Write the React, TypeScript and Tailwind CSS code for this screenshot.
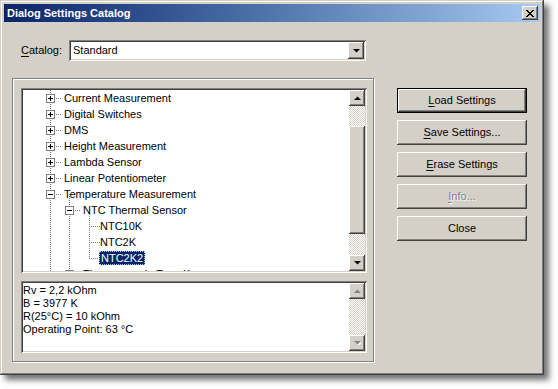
import React from "react";

const raised =
  "shadow-[inset_-1px_-1px_#404040,inset_1px_1px_#fff,inset_-2px_-2px_#808080,inset_2px_2px_#d4d0c8]";
const sunken =
  "shadow-[inset_1px_1px_#808080,inset_-1px_-1px_#fff,inset_2px_2px_#404040,inset_-2px_-2px_#d4d0c8]";
const hatch =
  "bg-[repeating-conic-gradient(#d4d0c8_0_25%,#fff_0_50%)] bg-[length:2px_2px]";

type Row = { label: string; level: number; box?: "+" | "-"; selected?: boolean };

const rows: Row[] = [
  { label: "Current Measurement", level: 1, box: "+" },
  { label: "Digital Switches", level: 1, box: "+" },
  { label: "DMS", level: 1, box: "+" },
  { label: "Height Measurement", level: 1, box: "+" },
  { label: "Lambda Sensor", level: 1, box: "+" },
  { label: "Linear Potentiometer", level: 1, box: "+" },
  { label: "Temperature Measurement", level: 1, box: "-" },
  { label: "NTC Thermal Sensor", level: 2, box: "-" },
  { label: "NTC10K", level: 3 },
  { label: "NTC2K", level: 3 },
  { label: "NTC2K2", level: 3, selected: true },
  { label: "Thermocouple Type K", level: 2, box: "+" },
];

const info = ["Rv = 2,2 kOhm", "B = 3977 K", "R(25°C) = 10 kOhm", "Operating Point: 63 °C"];

// line x for each level (relative to the list area)
const lineX: Record<number, number> = { 1: 27, 2: 46, 3: 66 };

function Arrow({ up, disabled }: { up?: boolean; disabled?: boolean }) {
  const pts = up ? "0,4 7,4 3.5,0.5" : "0,0 7,0 3.5,3.5";
  return (
    <svg width="7" height="4" viewBox="0 0 7 4">
      {disabled && <polygon points={pts} fill="#fff" transform="translate(1,1)" />}
      <polygon points={pts} fill={disabled ? "#808080" : "#000"} />
    </svg>
  );
}

function ScrollBtn({ up, disabled }: { up?: boolean; disabled?: boolean }) {
  return (
    <div className={`w-4 h-4 shrink-0 bg-[#d4d0c8] flex items-center justify-center ${raised}`}>
      <Arrow up={up} disabled={disabled} />
    </div>
  );
}

function TreeLines() {
  const dots = { stroke: "#808080", strokeDasharray: "1 1", shapeRendering: "crispEdges" as const };
  const cy = (i: number) => 8 + 16 * i;
  return (
    <svg className="absolute inset-0" width="326" height="181">
      {/* verticals */}
      <line x1={27.5} y1={0} x2={27.5} y2={181} {...dots} />
      <line x1={46.5} y1={cy(6)} x2={46.5} y2={cy(11)} {...dots} />
      <line x1={66.5} y1={cy(7)} x2={66.5} y2={cy(10)} {...dots} />
      {rows.map((r, i) => {
        const x = lineX[r.level];
        return <line key={i} x1={x} y1={cy(i) + 0.5} x2={x + 11} y2={cy(i) + 0.5} {...dots} />;
      })}
      {/* expand boxes */}
      {rows.map((r, i) =>
        r.box ? (
          <g key={"b" + i} shapeRendering="crispEdges">
            <rect x={lineX[r.level] - 4 + 0.5} y={cy(i) - 4 + 0.5} width={8} height={8} fill="#fff" stroke="#808080" />
            <line x1={lineX[r.level] - 2} y1={cy(i) + 0.5} x2={lineX[r.level] + 3} y2={cy(i) + 0.5} stroke="#000" />
            {r.box === "+" && (
              <line x1={lineX[r.level] + 0.5} y1={cy(i) - 2} x2={lineX[r.level] + 0.5} y2={cy(i) + 3} stroke="#000" />
            )}
          </g>
        ) : null
      )}
    </svg>
  );
}

function Button({ label, u, def, disabled }: { label: string; u?: number; def?: boolean; disabled?: boolean }) {
  const text =
    u === undefined ? (
      label
    ) : (
      <>
        {label.slice(0, u)}
        <span className="underline underline-offset-2">{label[u]}</span>
        {label.slice(u + 1)}
      </>
    );
  return (
    <div
      className={`h-[25px] w-[130px] bg-[#d4d0c8] flex items-center justify-center text-[11px] ${
        def
          ? "border border-black shadow-[inset_-1px_-1px_#404040,inset_1px_1px_#fff,inset_-2px_-2px_#808080]"
          : raised
      } ${disabled ? "text-[#808080] [text-shadow:1px_1px_0_#fff]" : "text-black"}`}
    >
      <span>{text}</span>
    </div>
  );
}

export default function App() {
  return (
    <div className="w-[558px] h-[389px] bg-white" style={{ fontFamily: '"Liberation Sans", Arial, sans-serif' }}>
      <div
        className={`w-[544px] h-[375px] bg-[#d4d0c8] p-1 flex flex-col shadow-[inset_-1px_-1px_#404040,inset_1px_1px_#d4d0c8,inset_-2px_-2px_#808080,inset_2px_2px_#fff,5px_5px_6px_rgba(0,0,0,0.55)]`}
      >
        {/* ================= TITLE ================= */}
        <div className="h-[18px] bg-gradient-to-r from-[#0a246a] to-[#a6caf0] flex items-center justify-between pl-[3px] pr-[2px]">
          <span className="text-white font-bold text-[11px] leading-none">Dialog Settings Catalog</span>
          <div className={`w-4 h-[14px] bg-[#d4d0c8] flex items-center justify-center ${raised}`}>
            <svg width="8" height="7" viewBox="0 0 8 7" shapeRendering="crispEdges">
              <path d="M0 0h2v1h-2zM6 0h2v1h-2zM1 1h2v1h-2zM5 1h2v1h-2zM2 2h4v1h-4zM3 3h2v1h-2zM2 4h4v1h-4zM1 5h2v1h-2zM5 5h2v1h-2zM0 6h2v1h-2zM6 6h2v1h-2z" fill="#000" />
            </svg>
          </div>
        </div>

        {/* ================= CATALOG ================= */}
        <div className="flex items-center mt-[18px] pl-[17px] text-[11px] text-black">
          <span className="w-[48px]">
            <span className="underline underline-offset-2">C</span>atalog:
          </span>
          <div className={`w-[297px] h-[21px] bg-white p-[2px] flex items-center ${sunken}`}>
            <span className="flex-1 pl-[2px]">Standard</span>
            <div className={`w-4 h-[17px] bg-[#d4d0c8] flex items-center justify-center ${raised}`}>
              <Arrow />
            </div>
          </div>
        </div>

        {/* ================= MAIN ================= */}
        <div className="flex mt-[17px] pl-2">
          <div className="w-[362px] h-[284px] border border-[#808080] shadow-[1px_1px_0_0_#fff,inset_1px_1px_#fff] pt-[9px] pl-2 flex flex-col">
            {/* Tree */}
            <div className={`w-[346px] h-[185px] bg-white p-[2px] flex ${sunken}`}>
              <div className="relative w-[326px] h-[181px] overflow-hidden text-[11px] text-black">
                <TreeLines />
                <div className="relative flex flex-col">
                  {rows.map((r) => (
                    <div
                      key={r.label}
                      className="h-4 flex items-center"
                      style={{ paddingLeft: lineX[r.level] + (r.level === 3 ? 10 : 13) }}
                    >
                      {r.selected ? (
                        <span className="bg-[#0a246a] text-white px-[1px] h-[14px] leading-[12px] border border-dotted border-[#a6caf0]">
                          {r.label}
                        </span>
                      ) : (
                        <span className="px-[1px]">{r.label}</span>
                      )}
                    </div>
                  ))}
                </div>
              </div>
              <div className="w-4 flex flex-col">
                <ScrollBtn up />
                <div className={`h-5 ${hatch}`} />
                <div className={`h-[108px] bg-[#d4d0c8] ${raised}`} />
                <div className={`flex-1 ${hatch}`} />
                <ScrollBtn />
              </div>
            </div>

            {/* Info */}
            <div className={`w-[346px] h-[72px] mt-2 bg-white p-[2px] flex ${sunken}`}>
              <div className="flex-1 pt-[1px] text-[11px] leading-[13px] text-black">
                {info.map((t) => (
                  <div key={t}>{t}</div>
                ))}
              </div>
              <div className="w-4 flex flex-col">
                <ScrollBtn up disabled />
                <div className={`flex-1 ${hatch}`} />
                <ScrollBtn disabled />
              </div>
            </div>
          </div>

          {/* ================= BUTTONS ================= */}
          <div className="ml-[23px] mt-[10px] flex flex-col gap-[7px]">
            <Button label="Load Settings" u={0} def />
            <Button label="Save Settings..." u={0} />
            <Button label="Erase Settings" u={0} />
            <Button label="Info..." u={0} disabled />
            <Button label="Close" />
          </div>
        </div>
      </div>
    </div>
  );
}
